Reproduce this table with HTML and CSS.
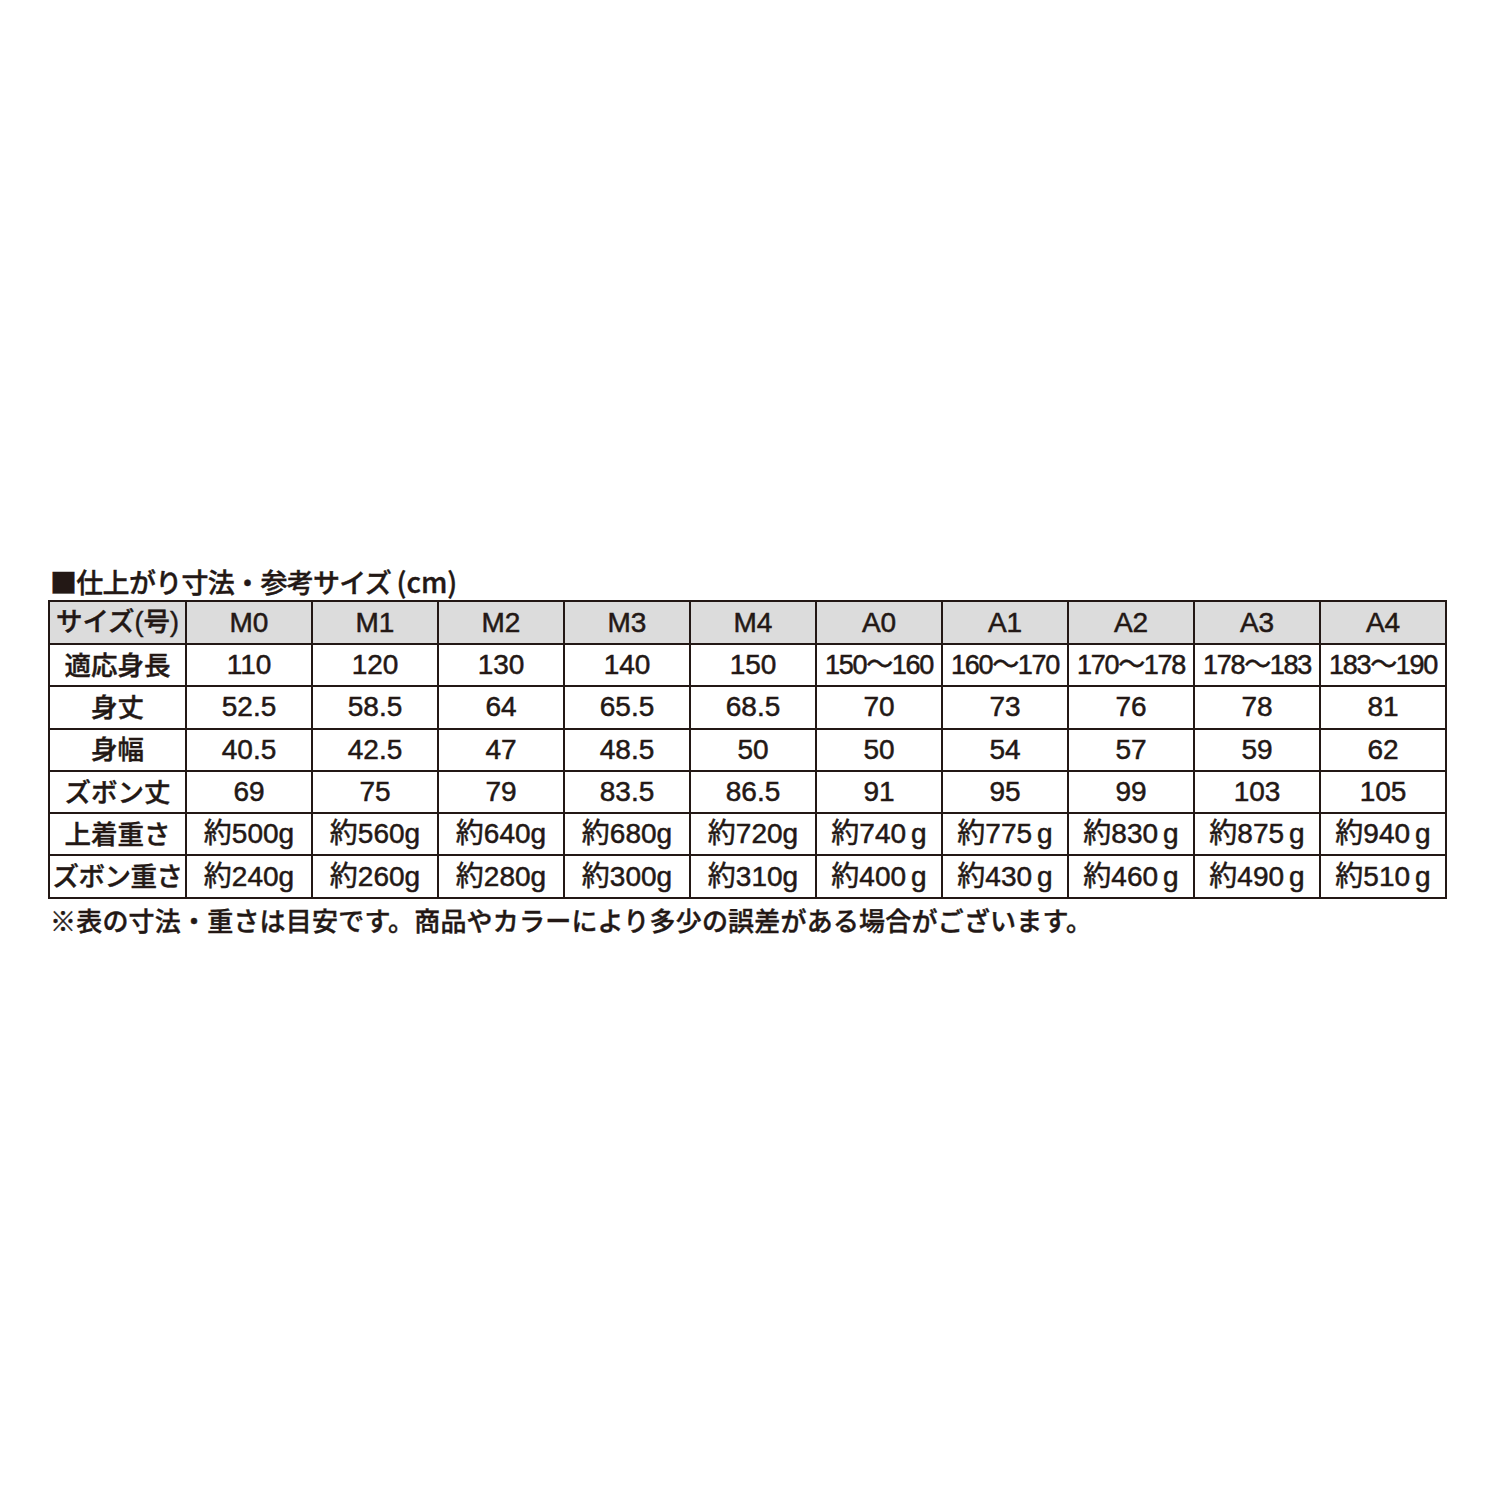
FILE: index.html
```html
<!DOCTYPE html>
<html lang="ja">
<head>
<meta charset="utf-8">
<title>仕上がり寸法・参考サイズ</title>
<link rel="stylesheet" href="styles.css">
</head>
<body>
<div class="wrap">
  <h1 class="title">■仕上がり寸法・参考サイズ <span class="cm">(cm)</span></h1>
  <table class="size-table">
    <colgroup>
      <col class="c-label">
      <col class="c-val"><col class="c-val"><col class="c-val"><col class="c-val"><col class="c-val">
      <col class="c-val"><col class="c-val"><col class="c-val"><col class="c-val"><col class="c-val">
    </colgroup>
    <tr class="head">
      <th class="label">サイズ<span class="paren">(</span>号<span class="paren">)</span></th>
      <th>M0</th><th>M1</th><th>M2</th><th>M3</th><th>M4</th><th>A0</th><th>A1</th><th>A2</th><th>A3</th><th>A4</th>
    </tr>
    <tr>
      <td class="label">適応身長</td>
      <td>110</td><td>120</td><td>130</td><td>140</td><td>150</td>
      <td class="range">150〜160</td><td class="range">160〜170</td><td class="range">170〜178</td><td class="range">178〜183</td><td class="range">183〜190</td>
    </tr>
    <tr>
      <td class="label">身丈</td>
      <td>52.5</td><td>58.5</td><td>64</td><td>65.5</td><td>68.5</td><td>70</td><td>73</td><td>76</td><td>78</td><td>81</td>
    </tr>
    <tr>
      <td class="label">身幅</td>
      <td>40.5</td><td>42.5</td><td>47</td><td>48.5</td><td>50</td><td>50</td><td>54</td><td>57</td><td>59</td><td>62</td>
    </tr>
    <tr>
      <td class="label">ズボン丈</td>
      <td>69</td><td>75</td><td>79</td><td>83.5</td><td>86.5</td><td>91</td><td>95</td><td>99</td><td>103</td><td>105</td>
    </tr>
    <tr>
      <td class="label">上着重さ</td>
      <td>約500g</td><td>約560g</td><td>約640g</td><td>約680g</td><td>約720g</td>
      <td>約740<span class="g">g</span></td><td>約775<span class="g">g</span></td><td>約830<span class="g">g</span></td><td>約875<span class="g">g</span></td><td>約940<span class="g">g</span></td>
    </tr>
    <tr>
      <td class="label tight">ズボン重さ</td>
      <td>約240g</td><td>約260g</td><td>約280g</td><td>約300g</td><td>約310g</td>
      <td>約400<span class="g">g</span></td><td>約430<span class="g">g</span></td><td>約460<span class="g">g</span></td><td>約490<span class="g">g</span></td><td>約510<span class="g">g</span></td>
    </tr>
  </table>
  <p class="note">※表の寸法・重さは目安です。商品やカラーにより多少の誤差がある場合がございます。</p>
</div>
</body>
</html>
```
FILE: styles.css
```css
html, body {
  margin: 0;
  padding: 0;
  background: #ffffff;
}

body {
  font-family: "Noto Sans CJK JP", "Noto Sans", sans-serif;
  color: #231815;
}

.wrap {
  padding: 562px 0 0 48px;
  width: 1398px;
}

.title {
  margin: 0 0 0 2px;
  font-size: 27px;
  font-weight: 500;
  line-height: 38px;
  height: 38px;
  letter-spacing: -0.7px;
  -webkit-text-stroke: 0.4px #231815;
}

.cm {
  font-size: 28px;
  letter-spacing: 0;
}

.size-table {
  border-collapse: collapse;
  table-layout: fixed;
  width: 1398px;
  border: 2px solid #231815;
}

.c-label { width: 137px; }
.c-val { width: 126px; }

.size-table th,
.size-table td {
  border: 2px solid #231815;
  height: 40.3px;
  padding: 0;
  text-align: center;
  vertical-align: middle;
  font-family: "Liberation Sans", "Noto Sans CJK JP", sans-serif;
  font-size: 28px;
  font-weight: 400;
  line-height: 38px;
  white-space: nowrap;
  overflow: hidden;
  -webkit-text-stroke: 0.5px #231815;
}

.head th {
  background: #dcdcdc;
}

.size-table .label {
  font-family: "Noto Sans CJK JP", sans-serif;
  font-size: 26.5px;
  font-weight: 500;
  letter-spacing: 0;
  height: 37.3px;
  padding-bottom: 3px;
  line-height: 36px;
  -webkit-text-stroke: 0.4px #231815;
}

.size-table .label.tight {
  letter-spacing: -0.5px;
}

.paren {
  font-family: "Liberation Sans", sans-serif;
  font-size: 27px;
  font-weight: 400;
}

.size-table .range {
  letter-spacing: -1.3px;
  font-size: 27px;
}

.g {
  margin-left: 5px;
}

.note {
  margin: 3px 0 0 2px;
  font-size: 26px;
  font-weight: 500;
  line-height: 36px;
  letter-spacing: 0.2px;
  -webkit-text-stroke: 0.4px #231815;
}
```
